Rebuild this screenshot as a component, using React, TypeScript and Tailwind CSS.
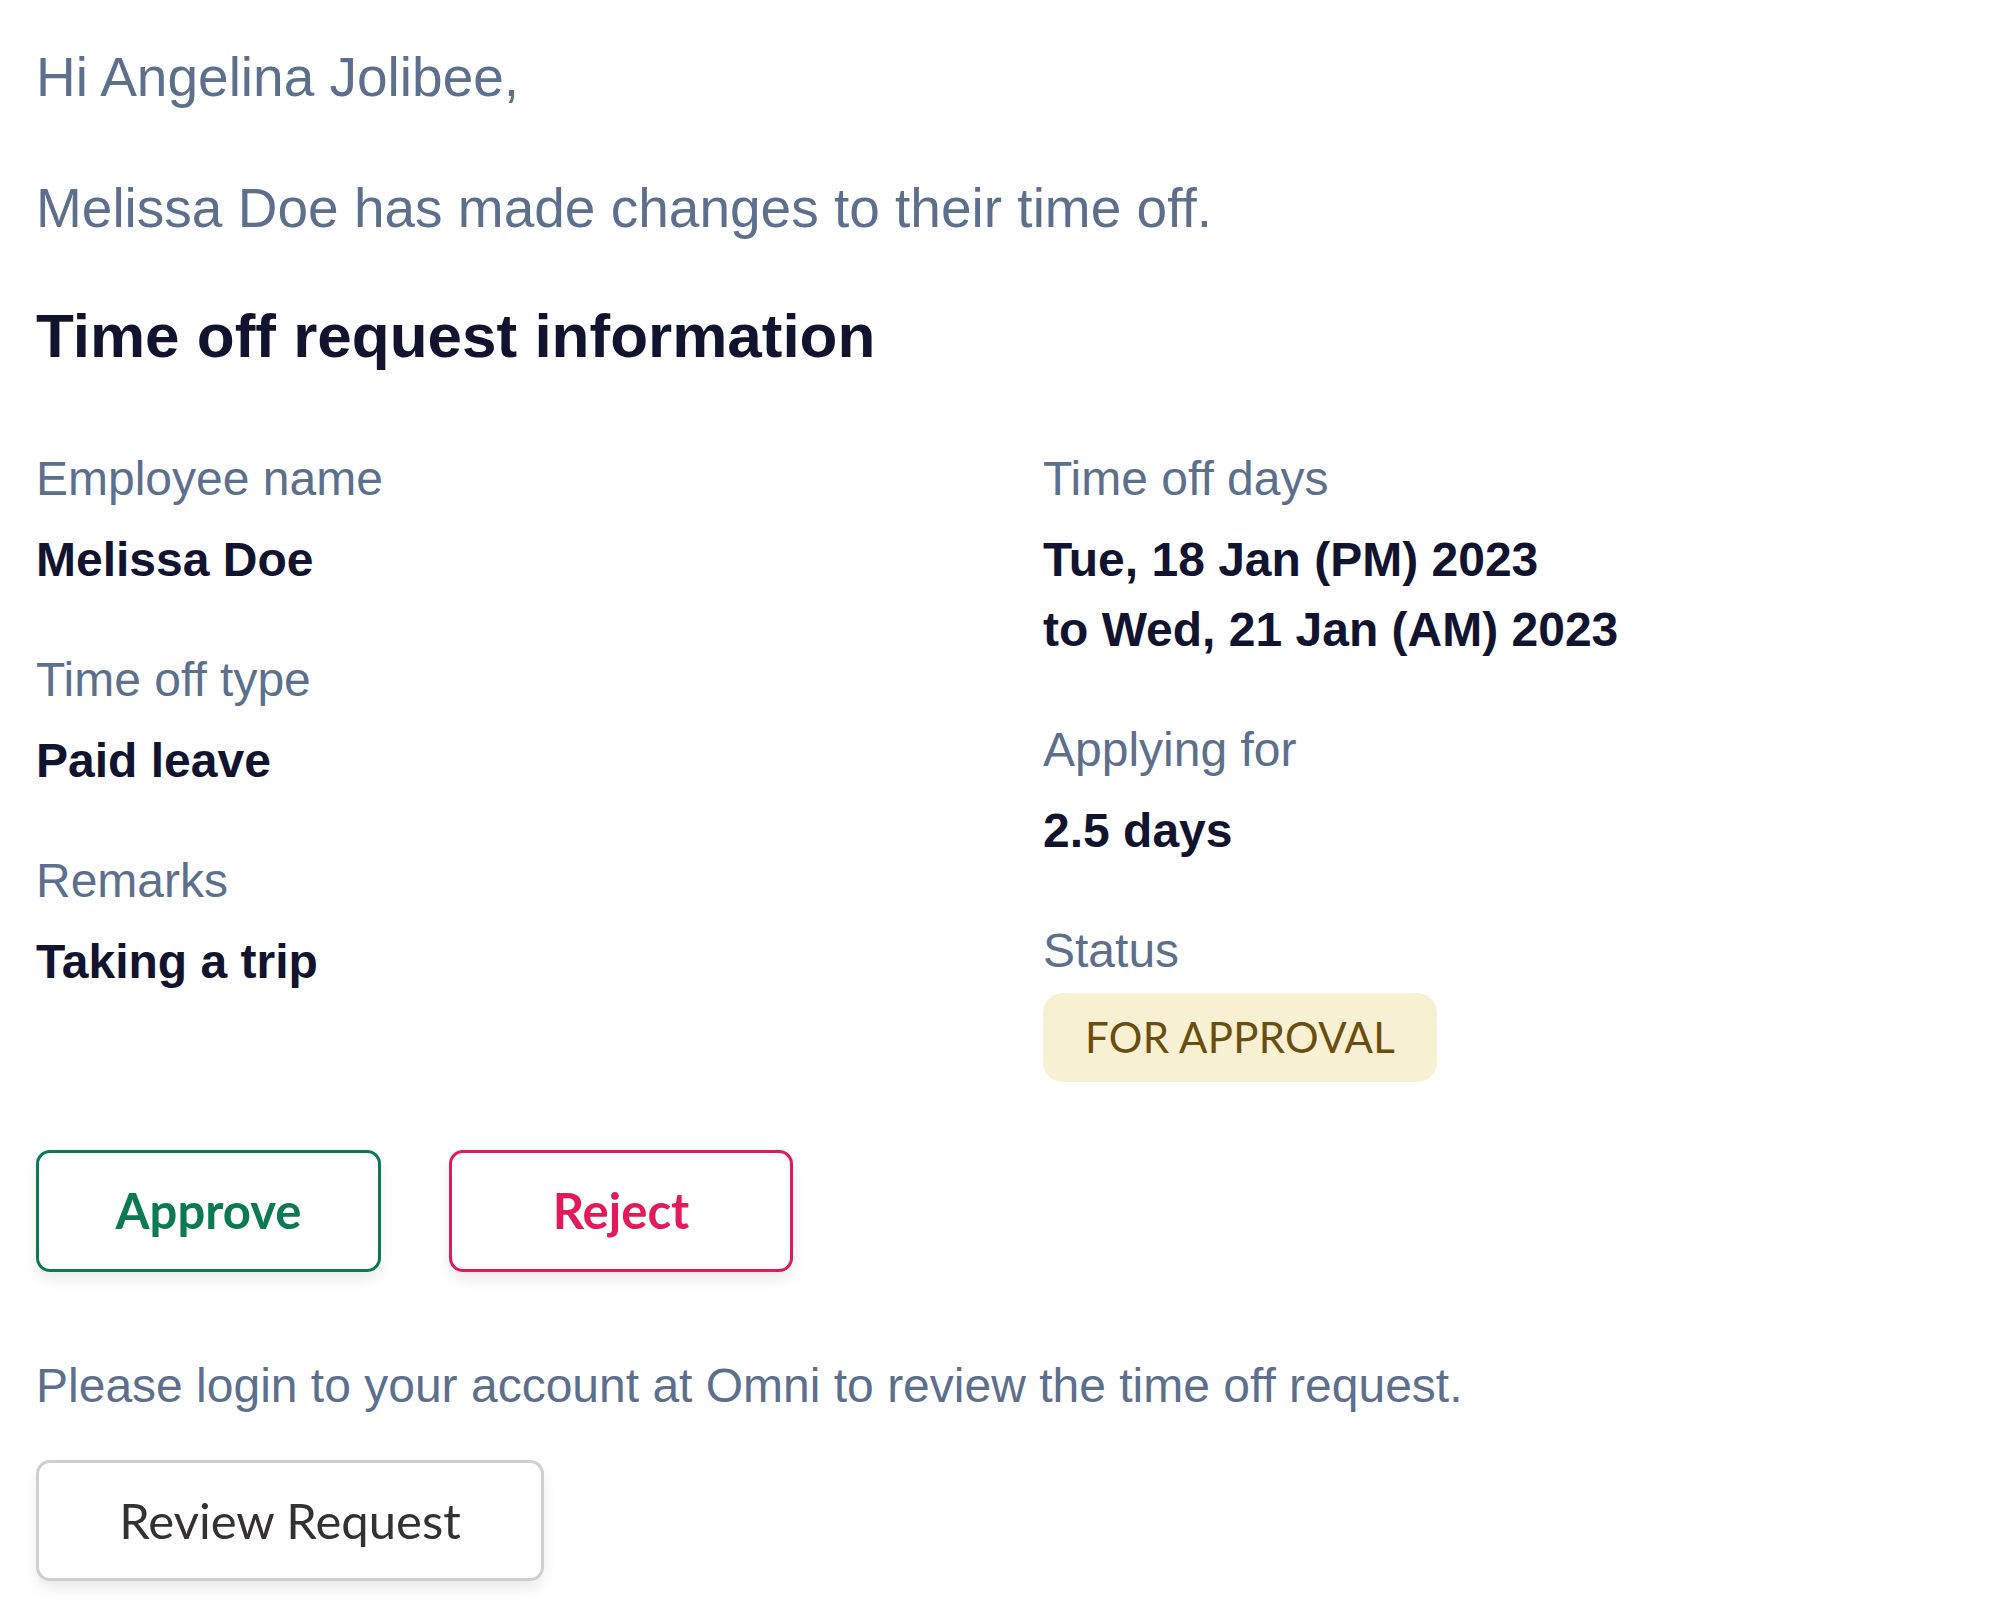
export default function App() {
  const sans = "font-['Liberation_Sans',Arial,sans-serif]";
  const lato = "font-['Lato',sans-serif]";

  return (
    <div className={`min-h-screen bg-white pl-[36px] pt-[37px] ${sans}`}>
      {/* Greeting */}
      <p className="text-[55px] leading-[80px] text-[#5c6f8c]">Hi Angelina Jolibee,</p>
      <p className="mt-[51px] text-[55px] leading-[80px] text-[#5c6f8c]">
        Melissa Doe has made changes to their time off.
      </p>

      <h1 className="mt-[48px] text-[62px] font-bold leading-[80px] text-[#12142f]">
        Time off request information
      </h1>

      {/* Details */}
      <div className="mt-[67px] flex">
        <div className="w-[1007px]">
          <div className="mb-[49px]">
            <p className="text-[48px] leading-[72px] text-[#5c6f8c]">Employee name</p>
            <p className="mt-[10px] text-[48px] font-bold leading-[70px] text-[#12142f]">Melissa Doe</p>
          </div>
          <div className="mb-[49px]">
            <p className="text-[48px] leading-[72px] text-[#5c6f8c]">Time off type</p>
            <p className="mt-[10px] text-[48px] font-bold leading-[70px] text-[#12142f]">Paid leave</p>
          </div>
          <div>
            <p className="text-[48px] leading-[72px] text-[#5c6f8c]">Remarks</p>
            <p className="mt-[10px] text-[48px] font-bold leading-[70px] text-[#12142f]">Taking a trip</p>
          </div>
        </div>

        <div>
          <div className="mb-[49px]">
            <p className="text-[48px] leading-[72px] text-[#5c6f8c]">Time off days</p>
            <p className="mt-[10px] text-[48px] font-bold leading-[70px] text-[#12142f]">
              Tue, 18 Jan (PM) 2023
              <br />
              to Wed, 21 Jan (AM) 2023
            </p>
          </div>
          <div className="mb-[49px]">
            <p className="text-[48px] leading-[72px] text-[#5c6f8c]">Applying for</p>
            <p className="mt-[10px] text-[48px] font-bold leading-[70px] text-[#12142f]">2.5 days</p>
          </div>
          <div>
            <p className="text-[48px] leading-[72px] text-[#5c6f8c]">Status</p>
            <span
              className={`mt-[6px] inline-flex h-[89px] items-center rounded-[20px] bg-[#f8f0d2] px-[42px] text-[42px] tracking-[0.3px] text-[#6a4d10] ${lato}`}
            >
              FOR APPROVAL
            </span>
          </div>
        </div>
      </div>

      {/* Actions */}
      <div className={`mt-[68px] flex gap-[68px] ${lato}`}>
        <button className="flex h-[122px] w-[345px] items-center justify-center rounded-[14px] border-[3px] border-[#0b7a53] bg-white text-[49px] font-bold text-[#0b7a53] shadow-[0_8px_14px_rgba(0,0,0,0.08)]">
          Approve
        </button>
        <button className="flex h-[122px] w-[344px] items-center justify-center rounded-[14px] border-[3px] border-[#e2195a] bg-white text-[49px] font-bold text-[#e2195a] shadow-[0_8px_14px_rgba(0,0,0,0.08)]">
          Reject
        </button>
      </div>

      <p className="mt-[78px] text-[48px] leading-[72px] text-[#5c6f8c]">
        Please login to your account at Omni to review the time off request.
      </p>

      <button
        className={`mt-[38px] flex h-[121px] w-[508px] items-center justify-center rounded-[14px] border-[3px] border-[#cfcfcf] bg-white text-[49px] text-[#333132] shadow-[0_8px_14px_rgba(0,0,0,0.08)] ${lato}`}
      >
        Review Request
      </button>
    </div>
  );
}
